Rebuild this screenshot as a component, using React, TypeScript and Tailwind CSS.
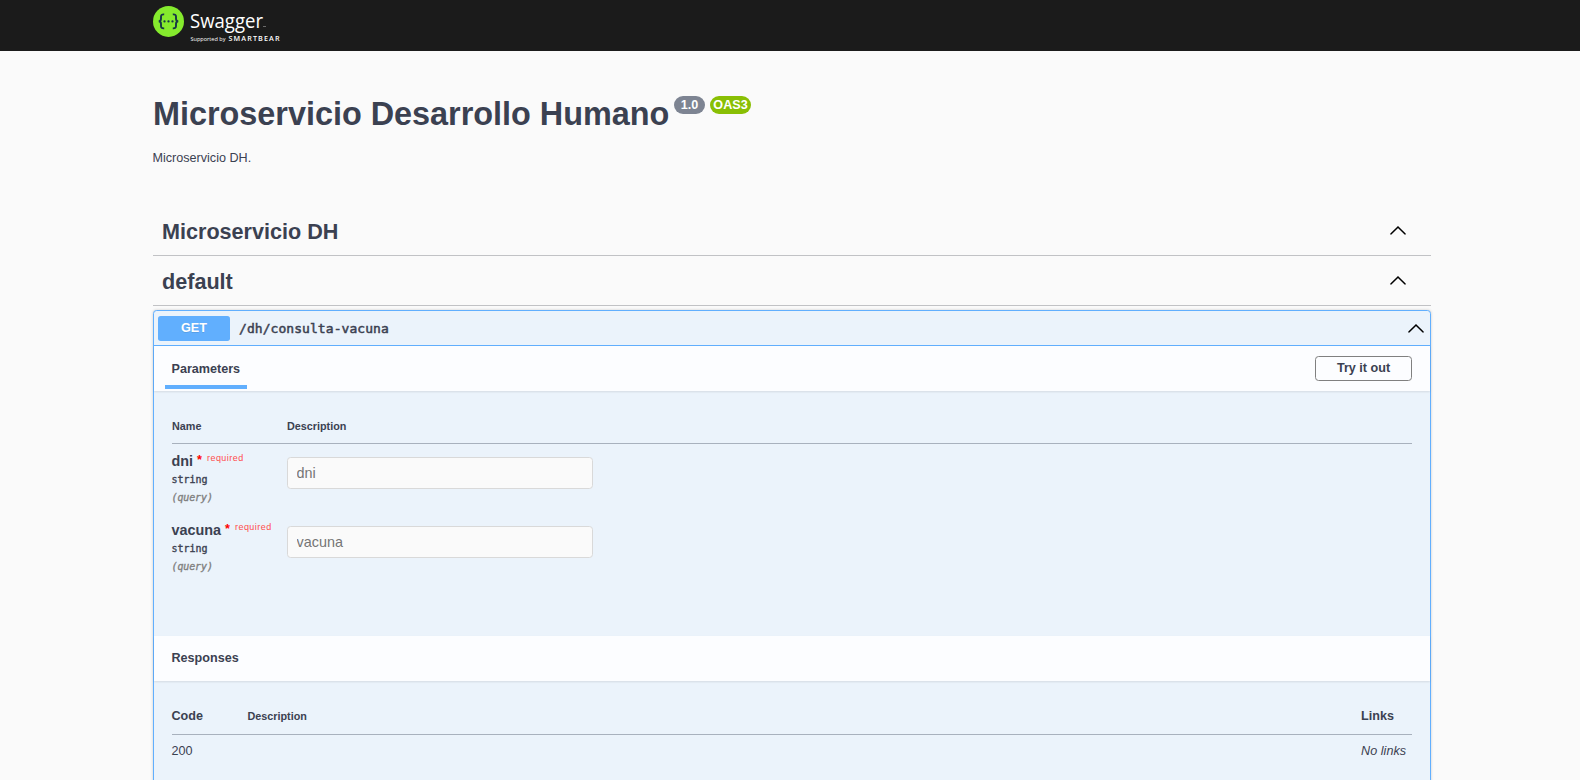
import React from "react";

function Logo() {
  return (
    <svg width="132" height="51" viewBox="0 0 132 51" role="img" aria-label="Swagger">
      <circle cx="15.5" cy="21.4" r="15.5" fill="#85ea2d" />
      <g fill="none" stroke="#173647" strokeWidth="1.9" strokeLinecap="butt">
        <path d="M11.2 14.400c-2.500-.2-3.200.7-3.200 2.400v1.700c0 1.700-.5 2.800-2.300 2.800 1.800 0 2.300 1.100 2.300 2.800v1.800c0 1.800.7 2.600 3.200 2.400" />
        <path d="M19.800 14.400c2.500-.2 3.200.7 3.200 2.400v1.700c0 1.700.5 2.800 2.300 2.800-1.800 0-2.300 1.100-2.300 2.800v1.800c0 1.800-.7 2.600-3.200 2.400" />
      </g>
      <g fill="#173647">
        <circle cx="11.500" cy="21.400" r="1.150" />
        <circle cx="15.500" cy="21.400" r="1.150" />
        <circle cx="19.500" cy="21.400" r="1.150" />
      </g>
      <g fill="#fff" fontFamily="'Open Sans', sans-serif">
        <text x="37" y="28" fontSize="19.800" textLength="73" lengthAdjust="spacingAndGlyphs">Swagger</text>
        <text x="37.500" y="40.500" fontSize="6" textLength="35" lengthAdjust="spacingAndGlyphs">Supported by</text>
        <text x="75.500" y="40.500" fontSize="7.200" fontWeight="600" textLength="51" lengthAdjust="spacing">SMARTBEAR</text>
        <rect x="110" y="26" width="3" height="1" fillOpacity="0.35" />
      </g>
    </svg>
  );
}

function Arrow() {
  return (
    <svg width="18" height="18" viewBox="0 0 20 20" className="block shrink-0">
      <path
        fill="#000"
        stroke="#000"
        strokeWidth="0.2"
        d="M17.418 14.908C17.69 15.176 18.127 15.176 18.397 14.908C18.667 14.64 18.668 14.207 18.397 13.939L10.489 6.109C10.219 5.841 9.782 5.841 9.51 6.109L1.602 13.939C1.332 14.207 1.332 14.64 1.602 14.908C1.873 15.176 2.311 15.176 2.581 14.908L10 7.767L17.418 14.908Z"
      />
    </svg>
  );
}

function Tag({ name }: { name: string }) {
  return (
    <h3 className="flex h-[50px] items-center justify-between border-b border-[#c1c2c5] pr-6 pl-[9px] text-[21.6px] font-bold">
      <span className="pt-0.5 leading-[47px]">{name}</span>
      <span className="pb-0.5">
        <Arrow />
      </span>
    </h3>
  );
}

function Param({ name }: { name: string }) {
  return (
    <div className="flex h-[69px]">
      <div className="-ml-[0.5px] w-[115.5px] pt-2">
        <div className="flex h-[19px] text-[14.4px] leading-[18px] font-bold whitespace-nowrap">
          <span>{name}</span>
          <span className="ml-1 text-[12.6px] leading-[17px] text-[#ff0000]">*</span>
          <span className="-mt-[3px] ml-[5px] text-[9px] leading-[18px] font-normal tracking-[0.45px] text-[#ff4d4d]">required</span>
        </div>
        <div className="h-[18px] font-['DejaVu_Sans_Mono',monospace] text-[10px] leading-[18px] tracking-[-0.02px] [-webkit-text-stroke:0.35px_#3b4151]">string</div>
        <div className="h-[18px] font-['DejaVu_Sans_Mono',monospace] text-[10px] leading-[18px] tracking-[-0.12px] text-[#808080] italic [-webkit-text-stroke:0.35px_#808080]">(query)</div>
      </div>
      <input
        readOnly
        placeholder={name}
        className="mt-[13px] h-8 w-[306px] rounded-[3.600px] border border-[#d9d9d9] bg-[#fafafa] px-[8.500px] text-[14.4px] outline-none placeholder:text-[#757575]"
      />
    </div>
  );
}

export default function App() {
  return (
    <div className="h-[780px] overflow-hidden bg-[#fafafa] font-['Liberation_Sans',Arial,sans-serif] text-[#3b4151]">
      <header className="h-[51px] bg-[#1b1b1b] pl-[153px]">
        <Logo />
      </header>
      <main className="ml-[153px] w-[1278px]">
        <div className="flex h-[93px] items-start pt-[45px]">
          <h1 className="w-[521px] text-[32.4px] leading-9 font-bold tracking-[-0.01px] whitespace-nowrap">Microservicio Desarrollo Humano</h1>
          <span className="h-[18px] w-[31px] rounded-full bg-[#7d8492] text-center text-[12.6px] leading-[18px] font-bold text-white">1.0</span>
          <span className="ml-[5px] h-[18px] w-[41px] rounded-full bg-[#89bf04] text-center text-[12.6px] leading-[18px] font-bold text-white">OAS3</span>
        </div>
        <p className="-ml-[0.5px] h-[62px] pt-[5px] text-[12.6px] leading-[18px]">Microservicio DH.</p>
        <Tag name="Microservicio DH" />
        <Tag name="default" />

        <section className="mt-1 h-[480px] rounded-t-[3.600px] border border-[#61affe] bg-[#ebf3fb] shadow-[0_0_3px_rgba(0,0,0,0.19)]">
          <div className="flex h-[35px] items-center border-b border-[#61affe] pr-[5px] pl-1">
            <span className="h-[25px] w-[72px] rounded-[2.700px] bg-[#61affe] text-center text-[12.6px] leading-[24px] font-bold text-white [text-shadow:0_1px_0_rgba(0,0,0,0.1)]">GET</span>
            <span className="ml-[9px] flex-1 pt-0.5 font-['DejaVu_Sans_Mono',monospace] text-[13px] tracking-[0.06px] [-webkit-text-stroke:0.5px_#3b4151]">/dh/consulta-vacuna</span>
            <Arrow />
          </div>

          <div className="flex h-[45px] items-center justify-between bg-[#fcfdff] pr-[18px] pl-[11px] shadow-[0_1px_2px_rgba(0,0,0,0.1)]">
            <div className="mt-[-2px] h-[43px] w-[82px] border-b-4 border-[#61affe] pl-[6.500px] text-[12.6px] leading-[46px] font-bold">Parameters</div>
            <button className="h-[25px] w-[97px] rounded-[3.600px] border border-[#808080] pb-px text-[12.6px] leading-[21px] font-bold">Try it out</button>
          </div>

          <div className="h-[245px] px-[18px] pt-[23px]">
            <div className="flex h-[30px] border-b border-[#a8b1bd] text-[10.8px] leading-6 font-bold">
              <span className="w-[115px]">Name</span>
              <span>Description</span>
            </div>
            <Param name="dni" />
            <Param name="vacuna" />
          </div>

          <div className="h-[45px] bg-[#fcfdff] pl-[17.500px] text-[12.6px] leading-[44px] font-bold shadow-[0_1px_2px_rgba(0,0,0,0.1)]">Responses</div>

          <div className="px-[18px] pt-[23px]">
            <div className="flex h-[31px] border-b border-[#a8b1bd] text-[12.6px] leading-[24px] font-bold">
              <span className="-ml-[0.5px] w-[76px]">Code</span>
              <span className="flex-1 text-[10.8px] leading-6">Description</span>
              <span className="w-[51px]">Links</span>
            </div>
            <div className="flex pt-[7px] text-[12.6px] leading-[18px]">
              <span className="-ml-[0.5px] flex-1">200</span>
              <span className="w-[51px] tracking-[0.05px] whitespace-nowrap italic">No links</span>
            </div>
          </div>
        </section>
      </main>
    </div>
  );
}
